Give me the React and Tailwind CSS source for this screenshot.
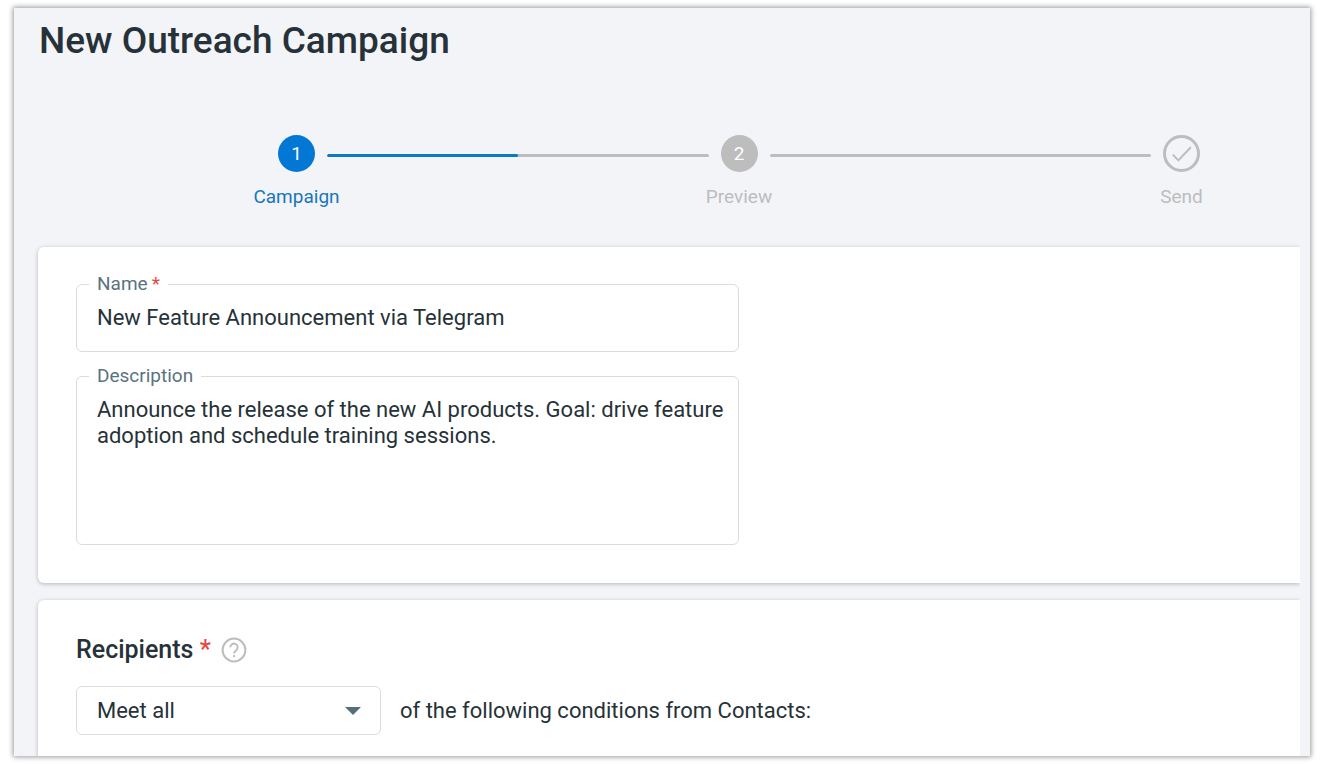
import React from "react";

function StepLine({ progress }) {
  return (
    <div className="mt-[19px] h-[3px] flex-1 overflow-hidden rounded-full bg-[#bdbdbd]">
      <div className="h-full rounded-full bg-[#0b79c4]" style={{ width: `${progress}%` }} />
    </div>
  );
}

function Step({ label, active, children }) {
  return (
    <li
      className={`flex w-[37px] flex-col items-center gap-[13px] text-[19px] leading-6 ${
        active ? "text-[#1976bc]" : "text-[#bdbdbd]"
      }`}
    >
      {children}
      <span className="whitespace-nowrap">{label}</span>
    </li>
  );
}

function Stepper() {
  return (
    <ol className="flex items-start gap-3 pr-[110px] pl-[264px]">
      <Step label="Campaign" active>
        <span className="flex size-[37px] items-center justify-center rounded-full bg-[#0277d4] text-white">1</span>
      </Step>
      <StepLine progress={50} />
      <Step label="Preview">
        <span className="flex size-[37px] items-center justify-center rounded-full bg-[#bdbdbd] text-white">2</span>
      </Step>
      <StepLine progress={0} />
      <Step label="Send">
        <svg className="size-[37px]" viewBox="0 0 37 37" fill="none" stroke="currentColor" aria-hidden="true">
          <circle cx="18.5" cy="18.5" r="17" strokeWidth="3" />
          <path d="M9.8 19.6l5.6 5.8L27.8 12.2" strokeWidth="2" />
        </svg>
      </Step>
    </ol>
  );
}

function Field({ id, label, required, children }) {
  return (
    <fieldset className="min-w-0 rounded-md border border-[#dcdcdc] pr-2 pl-3">
      <legend className="px-2 text-[19px] leading-6 text-[#5a7380]">
        <label htmlFor={id}>
          {label}
          {required && <span className="pl-1 text-[#e8483f]">*</span>}
        </label>
      </legend>
      {children}
    </fieldset>
  );
}

function Card({ children }) {
  return (
    <section className="rounded-l-md bg-white px-[38px] shadow-[0_1px_4px_rgba(0,0,0,0.25)]">{children}</section>
  );
}

export default function App() {
  return (
    <div className="h-screen bg-white px-3.5 py-2 font-['Roboto',sans-serif] text-[#263238]">
      <main className="flex h-full flex-col overflow-hidden bg-[#f2f4f8] shadow-[0_0_5px_1px_rgba(0,0,0,0.4)]">
        <h1 className="px-[25px] pt-2 text-[37px] leading-[50px] font-medium">New Outreach Campaign</h1>
        <div className="pt-[69px]">
          <Stepper />
        </div>
        <div className="mt-[30px] mr-2.5 flex flex-1 flex-col gap-[17px] overflow-hidden pt-2 pl-6">
          <Card>
            <form className="flex max-w-[663px] flex-col gap-3 pt-[25px] pb-[38px]">
              <Field id="name" label="Name" required>
                <input
                  id="name"
                  required
                  defaultValue="New Feature Announcement via Telegram"
                  className="mb-[13px] block h-[42px] w-full bg-transparent px-2 text-[22px] outline-none"
                />
              </Field>
              <Field id="description" label="Description">
                <textarea
                  id="description"
                  rows={5}
                  defaultValue="Announce the release of the new AI products. Goal: drive feature adoption and schedule training sessions."
                  className="mt-[9px] mb-[5px] block h-[142px] w-full resize-none bg-transparent pl-2 text-[22px] leading-[26px] outline-none"
                />
              </Field>
            </form>
          </Card>
          <Card>
            <div className="flex items-center pt-[34px]">
              <h2 className="text-[25px] leading-8 font-medium">
                Recipients <span className="text-[#e8483f]">*</span>
              </h2>
              <button type="button" aria-label="Help" className="ml-2.5 text-[#bdbdbd]">
                <svg className="size-[26px]" viewBox="0 0 26 26" fill="none" stroke="currentColor" aria-hidden="true">
                  <circle cx="13" cy="13" r="11.4" strokeWidth="2" />
                  <path d="M9.3 10.4a3.7 3.7 0 1 1 6.1 2.7c-1.3 1.1-2.3 1.7-2.3 3.3" strokeWidth="1.9" />
                  <circle cx="13.1" cy="19.1" r="1.2" fill="currentColor" stroke="none" />
                </svg>
              </button>
            </div>
            <div className="mt-5 flex items-center gap-[19px] pb-8 text-[22px] leading-7">
              <div className="grid w-[305px] items-center">
                <select
                  id="match"
                  aria-label="Match"
                  className="col-start-1 row-start-1 h-[49px] w-full appearance-none rounded-md border border-[#dcdcdc] bg-white px-5 outline-none"
                >
                  <option>Meet all</option>
                  <option>Meet any</option>
                </select>
                <svg
                  className="pointer-events-none col-start-1 row-start-1 mr-5 h-2 w-4 justify-self-end fill-[#546e7a]"
                  viewBox="0 0 16 8"
                  aria-hidden="true"
                >
                  <path d="M0 0h16L8 8z" />
                </svg>
              </div>
              <label htmlFor="match">of the following conditions from Contacts:</label>
            </div>
          </Card>
        </div>
      </main>
    </div>
  );
}
